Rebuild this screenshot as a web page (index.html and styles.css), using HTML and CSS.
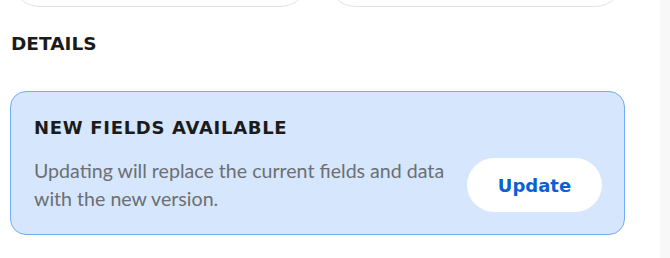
FILE: index.html
```html
<!DOCTYPE html>
<html lang="en">
<head>
<meta charset="utf-8">
<link rel="stylesheet" href="styles.css">
</head>
<body>
<div class="page">
  <main class="main">
    <div class="top-cards">
      <div class="top-card"></div>
      <div class="top-card"></div>
    </div>
    <h2 class="section-title">DETAILS</h2>
    <section class="notice">
      <h3 class="notice-title">NEW FIELDS AVAILABLE</h3>
      <div class="notice-row">
        <p class="notice-text">Updating will replace the current fields and data with the new version.</p>
        <button class="btn-update" type="button">Update</button>
      </div>
    </section>
  </main>
  <div class="scroll-strip"></div>
</div>
</body>
</html>
```

FILE: styles.css
```css
html, body {
  margin: 0;
  padding: 0;
  background: #ffffff;
  height: 100%;
}
.page {
  display: flex;
  height: 258px;
  overflow: hidden;
}
.main {
  flex: 1;
  padding: 0 35px 0 10px;
  font-family: Lato, "Open Sans", sans-serif;
}
.scroll-strip {
  width: 10px;
  background: #f8f8f8;
}
.top-cards {
  display: grid;
  grid-template-columns: 1fr 1fr;
  gap: 16px;
  margin-top: -53px;
}
.top-card {
  height: 58px;
  border: 1.5px solid #e3e3e3;
  border-radius: 30px;
  background: #fff;
}
.section-title {
  margin: 26px 0 0 1px;
  font-family: "DejaVu Sans", Inter, sans-serif;
  font-weight: 700;
  font-size: 18.5px;
  line-height: 22px;
  color: #1b1b1b;
}
.notice {
  margin-top: 36px;
  background: #d6e6fd;
  border: 1px solid #72acf6;
  border-radius: 16px;
  padding: 25px 22px 21px 23px;
}
.notice-title {
  margin: 0;
  font-family: "DejaVu Sans", Inter, sans-serif;
  font-weight: 700;
  font-size: 18px;
  line-height: 22px;
  letter-spacing: 0.7px;
  color: #1b1b1b;
}
.notice-row {
  display: flex;
  align-items: center;
  gap: 20px;
  margin-top: 18px;
}
.notice-text {
  flex: 1;
  margin: 0;
  font-size: 19.6px;
  line-height: 28px;
  color: #6c6f73;
}
.btn-update {
  flex: none;
  width: 135px;
  height: 54px;
  border: none;
  border-radius: 27px;
  background: #ffffff;
  color: #0b5fd6;
  font-family: "DejaVu Sans", Inter, sans-serif;
  font-weight: 700;
  font-size: 18px;
  cursor: pointer;
}
```
